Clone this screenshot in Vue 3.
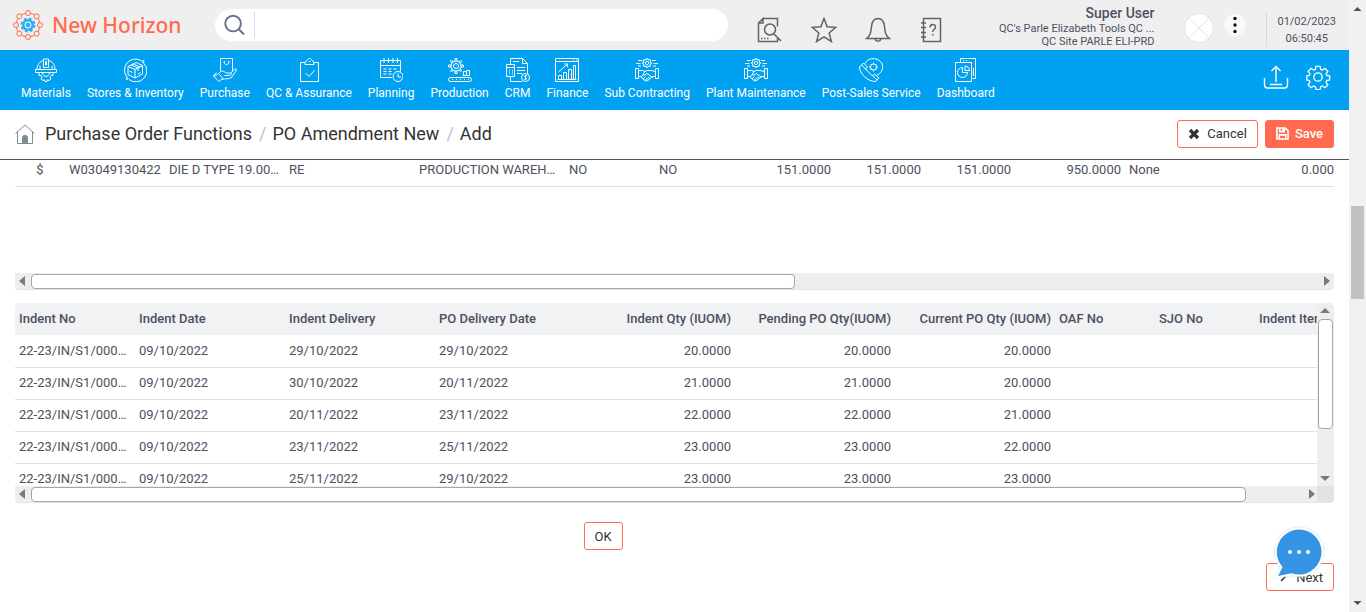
<script setup>
import { ref } from 'vue'

const search = ref('')

const handshake = `<circle cx="12" cy="5" r="4"/><circle cx="12" cy="5" r="1.7"/><path d="M12 0v1M12 9v1M7 5h1M16 5h1M8.500 1.500l.8.8M15.500 1.500l-.8.8M8.500 8.500l.8-.8M15.500 8.500l-.8-.8M1 5.500h4.500M3 2.500h4M18.500 5.500H23M17 2.500h4M3 8h3M18 8h3"/><path d="M.5 10.500h3v10h-3zM20.500 10.500h3v10h-3zM3.500 12.500h4l2.500 1 2-1h4l4.500 1M3.500 18.500h2l5 4.500 2-.5 5-4h3M10 13.500l-2 3c1.500 1.500 3 0 4-1l6 4M6 19l2-2M8 21l2.500-2.500M10 22.500l2.500-2.500M13 22.500l-1-1M15 20.500l-2-1.500"/>`

const modules = [
  {
    label: 'Materials',
    icon: `<path d="M3 11.500C3 6.500 6.500 3 9.500 2.500M14.500 2.500C18 3 21 6.500 21 11.500M1.500 11.500h21v3h-21zM9.500 1h5v8.500h-5zM11.500 3.500h1v3.500h-1zM6 11V8M18 11V8"/><path d="M5 15v2.500h2l1 1.500-1 2 2 1.500 1.500-.8.5 1.800h2l.5-1.800 1.500.8 2-1.500-1-2 1-1.500h2V15M8.500 15c.5 4.500 6.500 4.500 7 0"/>`,
  },
  {
    label: 'Stores & Inventory',
    icon: `<path d="M4 19a11 11 0 0 1 14-16.500M20.500 5A11 11 0 0 1 6 21.500"/><circle cx="20" cy="3.500" r="1"/><circle cx="4" cy="20.500" r="1"/><path d="M5 8.500l8-4 6.500 3v8.500L12 20l-7-3.500zM5 8.500l7 3 7.500-4M12 11.500V20M8 7l7 3v3M10 6l7 3M6.500 13l3 1.500M15 16l2.500-1.500"/>`,
  },
  {
    label: 'Purchase',
    icon: `<path d="M7.500.5h12v13M7.500.5v12.500M11 3.500c0 4 5 4 5 0M11 3.500h1M15 3.500h1M5.500 15.500c3-3.500 5.500-2.500 7.500-.500h4.500c1.500 1 .500 2.500-1 2.500h-5M17.500 15.500l4-4.500c1.500-.5 2.500.5 1.500 2l-5 7c-1 1-7 .5-9 1.500M5 15l5 5.500M3.500 14.500L.500 18l5.500 5.500 3.500-3M.5 18l4-1.500"/>`,
  },
  {
    label: 'QC & Assurance',
    icon: `<path d="M8 4.500H3.500v19h18v-19H17M8 6.500V4l2-1.500c.5-2.500 4.500-2.500 5 0L17 4v2.500zM11.500 3.500h2"/><path d="M8.500 15l3.500 3.500 5.500-6"/>`,
  },
  {
    label: 'Planning',
    icon: `<path d="M13 19.500H1.500V2.500h20v11M1.500 7.500h20M5 0v5M9.500 0v5M14 0v5M18.500 0v5M4.500 11h3M9.500 11h3M14.500 11h3M4.500 13.500h3M9.500 13.500h3M4.500 16h3M9.500 16h3"/><circle cx="19" cy="18.500" r="5"/><path d="M19 15.500v3.500h3"/>`,
  },
  {
    label: 'Production',
    icon: `<circle cx="8" cy="8" r="2.500"/><circle cx="8" cy="8" r="5"/><path d="M7 3V.5h2V3M7 13v2.500h2V13M3 7H.5v2H3M13 7h2.500v2H13M4 5L2.300 3.300l1.200-1.200L5 4M11 12l1.700 1.700 1.200-1.200L12 11M4 11l-1.700 1.700 1.200 1.200L5 12M11 4l1.700-1.700 1.200 1.200L12 5"/><path d="M15.500 17.500v-4h3v4M18.500 12.500h3v5M14.500 17.500h7"/><rect x=".5" y="19.500" width="23" height="4" rx="2"/><path d="M4 21.500h1M8 21.500h1M12 21.500h1M16 21.500h1M20 21.500h1"/>`,
  },
  {
    label: 'CRM',
    icon: `<path d="M4.500 6V.5h12l5 5V16M16.500.5v5h5M4.500 19v4.500H16M.5 6.500h8v12h-8zM.5 9.500h8M3 12h1M6 12h1M3 14h1M6 14h1M3 16h1M6 16h1M11 9.500h8M11 12.500h8M11 15.500h5M7 3.500h6"/><circle cx="19.500" cy="19.500" r="4"/><path d="M21 18c-2-1-3.500.5-1.500 1.500s.5 2.500-1.500 1.500M19.500 17v5"/>`,
  },
  {
    label: 'Finance',
    icon: `<path d="M.5.5h23v23H.5zM.5 3.500h23M18 2h1M21 2h1M3.500 21.500v-4h3v4M8.500 21.500v-7h3v7M13.500 21.500v-10h3v10M18.500 21.500v-14h2v14M2.500 21.500h19M3.500 14l9-8M9.500 6h3v3"/>`,
  },
  { label: 'Sub Contracting', icon: handshake },
  { label: 'Plant Maintenance', icon: handshake },
  {
    label: 'Post-Sales Service',
    icon: `<path d="M6 5.500C8 1 13 0 17 1c7 2 8.500 9 4.500 13.500-1 1.500-3 2.500-4 3"/><circle cx="14.500" cy="9" r="3"/><path d="M14.500 4.500v1.500M14.500 12v1.500M10 9h1.500M17.500 9H19M11.500 6l1 1M16.500 11l1 1M11.500 12l1-1M16.500 7l1-1"/><path d="M.5 9l4-4 4 4-2 2 7 7 2-2 4.500 4-3.500 3.500c-8 0-16-8-16-14.500zM2.500 7l5 5M13 17l5 5"/>`,
  },
  {
    label: 'Dashboard',
    icon: `<path d="M1.500 4.500h16v19h-16zM6.500 4V.5h15v20h-3M9 2.500h1M12 2.500h1M19.500 10v8"/><path d="M8.500 9.500a5 5 0 1 0 5 5h-5zM11 8v4.500h4.500c0-2.500-2-4.500-4.500-4.500z"/>`,
  },
]

const trail = ['Purchase Order Functions', 'PO Amendment New', 'Add']

const itemColumns = [
  { name: 'currency', value: '$' },
  { name: 'code', value: 'W03049130422' },
  { name: 'description', value: 'DIE D TYPE 19.00…' },
  { name: 'unit', value: 'RE' },
  { name: 'store', value: 'PRODUCTION WAREH…' },
  { name: 'flag', value: 'NO' },
  { name: 'closed', value: 'NO' },
  { name: 'qty', value: '151.0000' },
  { name: 'qty', value: '151.0000' },
  { name: 'rate-unit', value: '151.0000' },
  { name: 'amount', value: '950.0000' },
  { name: 'discount', value: 'None' },
  { name: 'last', value: '0.000' },
]

const indentHeads = [
  { name: 'no', text: 'Indent No' },
  { name: 'date', text: 'Indent Date' },
  { name: 'date', text: 'Indent Delivery' },
  { name: 'date', text: 'PO Delivery Date' },
  { name: 'iqty', text: 'Indent Qty (IUOM)' },
  { name: 'pqty', text: 'Pending PO Qty(IUOM)' },
  { name: 'pqty', text: 'Current PO Qty (IUOM)' },
  { name: 'ref', text: 'OAF No' },
  { name: 'ref', text: 'SJO No' },
  { name: 'ref', text: 'Indent Item' },
]

const indents = [
  ['22-23/IN/S1/000…', '09/10/2022', '29/10/2022', '29/10/2022', '20.0000', '20.0000', '20.0000', '', '', ''],
  ['22-23/IN/S1/000…', '09/10/2022', '30/10/2022', '20/11/2022', '21.0000', '21.0000', '20.0000', '', '', ''],
  ['22-23/IN/S1/000…', '09/10/2022', '20/11/2022', '23/11/2022', '22.0000', '22.0000', '21.0000', '', '', ''],
  ['22-23/IN/S1/000…', '09/10/2022', '23/11/2022', '25/11/2022', '23.0000', '23.0000', '22.0000', '', '', ''],
  ['22-23/IN/S1/000…', '09/10/2022', '25/11/2022', '29/10/2022', '23.0000', '23.0000', '23.0000', '', '', ''],
]
</script>

<template>
  <div class="shell">
    <div class="page">
      <header class="top">
        <a class="brand" href="#">
          <svg class="logo" viewBox="0 0 30 30" aria-hidden="true">
            <circle class="ring" cx="15" cy="15" r="12" />
            <g class="beads">
              <circle cx="15" cy="3" r="2.500" /><circle cx="23.700" cy="6.300" r="2.500" />
              <circle cx="27" cy="15" r="2.500" /><circle cx="23.700" cy="23.700" r="2.500" />
              <circle cx="15" cy="27" r="2.500" /><circle cx="6.300" cy="23.700" r="2.500" />
              <circle cx="3" cy="15" r="2.500" /><circle cx="6.300" cy="6.300" r="2.500" />
            </g>
            <circle cx="15" cy="15" r="6" fill="#35aef0" />
            <circle cx="15" cy="15" r="6.500" fill="none" stroke="#35aef0" stroke-width="2" stroke-dasharray="2.900 2.200" />
            <circle cx="15" cy="15" r="3" fill="none" stroke="#fff" />
          </svg>
          <span>New Horizon</span>
        </a>
        <div class="search">
          <button class="plain find" aria-label="Search">
            <svg viewBox="0 0 22 22"><circle cx="9.500" cy="9.500" r="8.200" /><path d="M15.500 15.500l5.500 5.500" /></svg>
          </button>
          <input v-model="search" type="text" aria-label="Search text" />
        </div>
        <div class="tools">
          <button class="plain" aria-label="Preview">
            <svg viewBox="0 0 26 26"><path d="M6 1.500h14.500v8M20.500 20v4.500h-19V6L6 1.500V6H1.500M4 21.500h1.500M7 21.500h1.500M10 21.500h1.500M17 17l7 7" /><circle cx="13" cy="12.500" r="5.500" /></svg>
          </button>
          <button class="plain" aria-label="Favourites">
            <svg viewBox="0 0 26 26"><path d="M13 1.500l3.200 8.300 8.500.5-6.500 5.600 2.200 8.600-7.400-4.700-7.400 4.700 2.200-8.600-6.500-5.600 8.500-.5z" /></svg>
          </button>
          <button class="plain" aria-label="Notifications">
            <svg viewBox="0 0 26 26"><path d="M1.500 21.500c4-3 4.500-6.500 5-12 .5-5 3-8 6.500-8s6 3 6.500 8c.5 5.500 1 9 5 12zM10 21.500c.5 3.500 5.500 3.500 6 0" /></svg>
          </button>
          <button class="plain" aria-label="Help">
            <svg viewBox="0 0 26 26"><path d="M4.500 1.500h17v23h-17zM2 6h5M2 10.500h5M2 15.500h5M2 20h5M11 10.500c0-4 5.500-4 5.500-.5 0 2.500-2.700 2-2.700 5M13.800 17v1.500" /></svg>
          </button>
        </div>
        <div class="user">
          <strong>Super User</strong>
          <span>QC's Parle Elizabeth Tools QC ...</span>
          <span>QC Site PARLE ELI-PRD</span>
        </div>
        <svg class="avatar" viewBox="0 0 30 30" role="img" aria-label="Profile picture">
          <circle cx="15" cy="15" r="14.500" /><path d="M4.500 4.500l21 21M25.500 4.500l-21 21" />
        </svg>
        <button class="plain more" aria-label="More options">
          <svg viewBox="0 0 22 22"><circle cx="11" cy="4.500" r="1.700" /><circle cx="11" cy="11" r="1.700" /><circle cx="11" cy="17.500" r="1.700" /></svg>
        </button>
        <div class="clock"><span>01/02/2023</span><span>06:50:45</span></div>
      </header>

      <nav class="modules" aria-label="Modules">
        <a v-for="m in modules" :key="m.label" href="#" class="module">
          <svg viewBox="0 0 24 24" aria-hidden="true" v-html="m.icon"></svg>
          <span>{{ m.label }}</span>
        </a>
        <div class="actions">
          <button class="plain" aria-label="Upload">
            <svg viewBox="0 0 26 26"><path d="M1.500 14v7c0 2 1 3 3 3h17c2 0 3-1 3-3v-7M13 18V3M8.500 7L13 2.500 17.500 7M7 20.500h12" /></svg>
          </button>
          <button class="plain" aria-label="Settings">
            <svg viewBox="-1 -1 28 28"><circle cx="13" cy="13" r="4.500" /><path d="M10.800 1.500h4.400l.7 3.400 1.700.7 2.900-1.900 3.100 3.100-1.900 2.900.7 1.700 3.100.4v4.400l-3.100.7-.7 1.700 1.900 2.900-3.100 3.100-2.900-1.900-1.700.7-.7 3.100h-4.400l-.7-3.100-1.700-.7-2.900 1.900-3.100-3.100 1.900-2.900-.7-1.700-2.600-.7v-4.400l2.600-.4.7-1.700-1.900-2.900 3.100-3.100 2.900 1.900 1.700-.7z" /></svg>
          </button>
        </div>
      </nav>

      <div class="titlebar">
        <a class="home" href="#" aria-label="Home">
          <svg viewBox="0 0 20 20"><path d="M.5 9.500L10 1l9.500 8.500M2.500 8v11.500h15V8" /><path class="door" d="M7.500 19.500v-6c0-3 5-3 5 0v6z" /></svg>
        </a>
        <ol class="trail">
          <li v-for="t in trail" :key="t"><a href="#">{{ t }}</a></li>
        </ol>
        <button class="btn">
          <svg viewBox="0 0 12 12"><path d="M2 2l8 8M10 2l-8 8" stroke="#333" stroke-width="3.200" /></svg>
          Cancel
        </button>
        <button class="btn primary">
          <svg class="disk" viewBox="0 0 14 14"><path d="M1 1h9l3 3v9H1zM4 1v4h5V1M3.500 13V8.500h7V13M7.500 1v3" fill="none" stroke="#fff" stroke-width="1.700" /></svg>
          Save
        </button>
      </div>

      <main>
        <section class="items" aria-label="Order items">
          <div class="items-view">
            <table>
              <colgroup><col v-for="(c, i) in itemColumns" :key="i" :class="c.name" /></colgroup>
              <tbody>
                <tr><td v-for="(c, i) in itemColumns" :key="i" :class="c.name">{{ c.value }}</td></tr>
              </tbody>
            </table>
          </div>
          <div class="hbar">
            <svg viewBox="0 0 16 16"><path d="M10 3v10L4 8z" /></svg>
            <i class="thumb first"></i><i class="rest first"></i>
            <svg viewBox="0 0 16 16"><path d="M6 3v10l6-5z" /></svg>
          </div>
        </section>

        <section class="indents" aria-label="Indents">
          <div class="indents-view">
            <table>
              <colgroup><col v-for="(h, i) in indentHeads" :key="i" :class="h.name" /></colgroup>
              <thead>
                <tr><th v-for="(h, i) in indentHeads" :key="i" scope="col" :class="h.name">{{ h.text }}</th></tr>
              </thead>
              <tbody>
                <tr v-for="(row, r) in indents" :key="r">
                  <td v-for="(cell, i) in row" :key="i" :class="indentHeads[i].name">{{ cell }}</td>
                </tr>
              </tbody>
            </table>
          </div>
          <div class="vbar">
            <svg viewBox="0 0 16 16"><path d="M3 10h10L8 5z" /></svg>
            <i class="thumb"></i><i class="rest"></i>
            <svg viewBox="0 0 16 16"><path d="M3 6h10l-5 5z" /></svg>
          </div>
          <div class="hbar">
            <svg viewBox="0 0 16 16"><path d="M10 3v10L4 8z" /></svg>
            <i class="thumb second"></i><i class="rest second"></i>
            <svg viewBox="0 0 16 16"><path d="M8 3v10l6-5z" /></svg>
          </div>
          <div class="corner"></div>
        </section>

        <button class="btn ok">OK</button>
        <div class="pager">
          <button class="btn">
            <svg viewBox="0 0 12 12"><path d="M4 2l4 4-4 4" stroke="#333" stroke-width="1.600" /></svg>
            Next
          </button>
          <button class="plain chat" aria-label="Chat">
            <svg viewBox="0 0 50 50">
              <path d="M25 2.500a22.500 22.500 0 1 1-7.500 43.700L4 49l4.500-9A22.500 22.500 0 0 1 25 2.500z" />
              <g fill="#fff"><circle cx="16" cy="25" r="2" /><circle cx="25" cy="25" r="2" /><circle cx="34" cy="25" r="2" /></g>
            </svg>
          </button>
        </div>
      </main>
    </div>

    <div class="window-bar" aria-hidden="true">
      <svg viewBox="0 0 17 17"><path d="M4.500 11h8l-4-4z" /></svg>
      <i class="above"></i><i class="grip"></i><i class="below"></i>
      <svg viewBox="0 0 17 17"><path d="M4.500 6h8l-4 4z" /></svg>
    </div>
  </div>
</template>

<style>
body {
  background: #fff;
  font-family: Roboto, "Liberation Sans", sans-serif;
}
</style>

<style scoped>
* {
  box-sizing: border-box;
}
.shell {
  display: flex;
  height: 100vh;
  overflow: hidden;
  font-size: 13px;
  color: #4d5061;
}
.page {
  flex: 1;
  min-width: 0;
}
svg {
  display: block;
  flex: none;
  fill: none;
}
a {
  color: inherit;
  text-decoration: none;
}
button,
input {
  font: inherit;
}
.plain {
  padding: 0;
  border: 0;
  background: none;
}

/* Header */
.top {
  display: flex;
  align-items: center;
  height: 50px;
  padding: 0 13px;
  background: #efefef;
}
.brand {
  display: flex;
  align-items: center;
  gap: 9px;
  width: 202px;
  font: 500 21px "Noto Sans", sans-serif;
  color: #ff6a50;
  white-space: nowrap;
}
.logo {
  width: 30px;
  height: 30px;
}
.ring {
  stroke: #ff6a50;
}
.beads {
  fill: #efefef;
  stroke: #ff6a50;
}
.search {
  display: flex;
  align-items: center;
  width: 38.8%;
  height: 32px;
  border-radius: 16px;
  background: #fff;
}
.find {
  padding: 2px 9px;
  border-right: 1px solid #dcdce8;
}
.find svg {
  width: 21px;
  height: 22px;
  stroke: #69708c;
  stroke-width: 2;
}
.search input {
  flex: 1;
  min-width: 0;
  margin: 0 16px 0 8px;
  border: 0;
  outline: 0;
  background: none;
}
.tools {
  display: flex;
  gap: 28px;
  margin: 9px auto 0 29px;
}
.tools svg {
  width: 26px;
  height: 26px;
  stroke: #636363;
  stroke-width: 1.5;
}
.user {
  display: flex;
  flex-direction: column;
  align-items: flex-end;
  margin: 2px 30px 0 0;
  font-size: 11px;
  line-height: 13px;
  white-space: nowrap;
}
.user strong {
  font-size: 14px;
  font-weight: 500;
  line-height: 18px;
}
.avatar {
  width: 30px;
  height: 30px;
  margin: 6px 10px 0 0;
  fill: #fff;
  stroke: #e2e2e2;
}
.more {
  margin-right: 20px;
}
.more svg {
  width: 22px;
  height: 22px;
  border-radius: 50%;
  background: #f9f9f9;
  fill: #111;
}
.clock {
  display: flex;
  flex-direction: column;
  align-items: center;
  margin-top: 10px;
  padding-left: 10px;
  border-left: 1px solid #d8d8e2;
  font-size: 11px;
  line-height: 17px;
}

/* Modules */
.modules {
  display: flex;
  align-items: flex-start;
  gap: 16px;
  height: 60px;
  padding: 8px 18px 0 21px;
  background: #00a1f1;
  color: #fff;
}
.modules svg {
  width: 24px;
  height: 24px;
  stroke: #fff;
}
.module {
  display: flex;
  flex-direction: column;
  align-items: center;
  gap: 3px;
  font-size: 12px;
  line-height: 16px;
  white-space: nowrap;
}
.actions {
  display: flex;
  gap: 16px;
  margin: 6px 0 0 auto;
}
.actions svg {
  width: 26px;
  height: 26px;
  stroke-width: 1.4;
}

/* Title bar */
.titlebar {
  display: flex;
  align-items: center;
  height: 50px;
  padding: 0 15px 2px;
  border-bottom: 1px solid #555;
}
.home svg {
  width: 20px;
  height: 20px;
  stroke: #7b8f93;
}
.home .door {
  fill: #7b8f93;
}
.trail {
  display: flex;
  margin: 0 auto 0 10px;
  padding: 0;
  list-style: none;
  font-size: 18px;
  line-height: 24px;
  color: #333;
}
.trail li + li::before {
  content: "/";
  margin: 0 6px 0 7px;
  color: #c0c0c0;
}
.btn {
  display: flex;
  align-items: center;
  gap: 7px;
  height: 28px;
  padding: 0 10px;
  border: 1px solid #ff6a50;
  border-radius: 3px;
  background: #fff;
  color: #333;
}
.btn svg {
  width: 12px;
  height: 12px;
}
.btn .disk {
  width: 13px;
  height: 13px;
}
.primary {
  gap: 6px;
  margin-left: 7px;
  background: #ff6a50;
  color: #fff;
  font-weight: 500;
}

/* Grids */
main {
  padding: 0 15px;
}
table {
  width: 100%;
  table-layout: fixed;
  border-collapse: separate;
  border-spacing: 0;
}
th,
td {
  padding: 0 4px;
  overflow: hidden;
  text-align: left;
  white-space: nowrap;
}
th {
  padding-bottom: 2px;
  background: #f1f2f4;
  font-weight: 500;
}
.items-view {
  height: 113px;
  overflow: hidden;
}
.items-view td {
  height: 27px;
  border-bottom: 1px solid #dfdfe5;
  line-height: 20px;
  vertical-align: top;
}
col.currency { width: 50px; }
col.code { width: 100px; }
col.description { width: 120px; }
col.unit { width: 130px; }
col.store { width: 150px; }
col.flag { width: 90px; }
col.closed { width: 90px; }
col.qty { width: 90px; }
col.rate-unit { width: 90px; }
col.amount { width: 110px; }
col.discount { width: 90px; }
td.currency {
  text-align: center;
}
td.qty,
td.rate-unit,
td.amount,
td.last,
.iqty,
.pqty {
  text-align: right;
}
td.last {
  padding-right: 0;
}
.hbar,
.vbar {
  display: flex;
  background: #eee;
}
.hbar svg,
.vbar svg {
  width: 16px;
  height: 16px;
  fill: #7a7a7a;
}
.hbar {
  height: 17px;
  border-bottom: 1px solid #e3e3e3;
  border-radius: 0 0 4px 4px;
}
.vbar {
  flex-direction: column;
  border-radius: 0 4px 0 0;
}
.thumb {
  border: 1px solid #a6a6a6;
  border-radius: 4px;
  background: #fff;
}
.hbar .thumb {
  margin-top: 1px;
}
.vbar .thumb {
  flex: 110;
  margin: 0 1px;
}
.vbar .rest { flex: 42; }
.thumb.first { flex: 763; }
.rest.first { flex: 524; }
.thumb.second { flex: 1215; }
.rest.second { flex: 55; }

.indents {
  display: grid;
  grid-template: 183px 17px / minmax(0, 1fr) 17px;
  margin-top: 13px;
}
.indents-view {
  overflow: hidden;
  border-radius: 4px 0 0 0;
}
.indents-view table {
  width: 1340px;
}
.indents-view th,
.indents-view td {
  height: 32px;
}
.indents-view td {
  padding-bottom: 1px;
}
.indents-view tr + tr td {
  padding-bottom: 2px;
  border-top: 1px solid #dfdfe5;
}
.indents .hbar {
  border-radius: 0 0 0 4px;
}
.corner {
  border-radius: 0 0 4px 0;
  background: #e3e3e3;
}
col.no { width: 120px; }
col.date { width: 150px; }
col.iqty { width: 150px; }
col.pqty { width: 160px; }
col.ref { width: 100px; }

.ok {
  margin: 19px 0 13px calc(50% - 91px);
}
.pager {
  position: relative;
  display: flex;
  justify-content: flex-end;
}
.pager .btn {
  gap: 7px;
}
.chat {
  position: absolute;
  right: 10px;
  bottom: 14px;
}
.chat svg {
  width: 50px;
  height: 50px;
  overflow: visible;
  fill: #3594e4;
  filter: drop-shadow(0 0 1px #c5d5e5);
}
.chat path {
  stroke: #fff;
  stroke-width: 4;
  paint-order: stroke;
}

/* Window scroll bar */
.window-bar {
  display: flex;
  flex-direction: column;
  width: 17px;
  background: #f1f1f1;
}
.window-bar svg {
  width: 17px;
  height: 17px;
  fill: #505050;
}
.above { flex: 189; }
.below { flex: 296; }
.grip {
  flex: 93;
  margin: 0 2px;
  background: #c1c1c1;
}
</style>
